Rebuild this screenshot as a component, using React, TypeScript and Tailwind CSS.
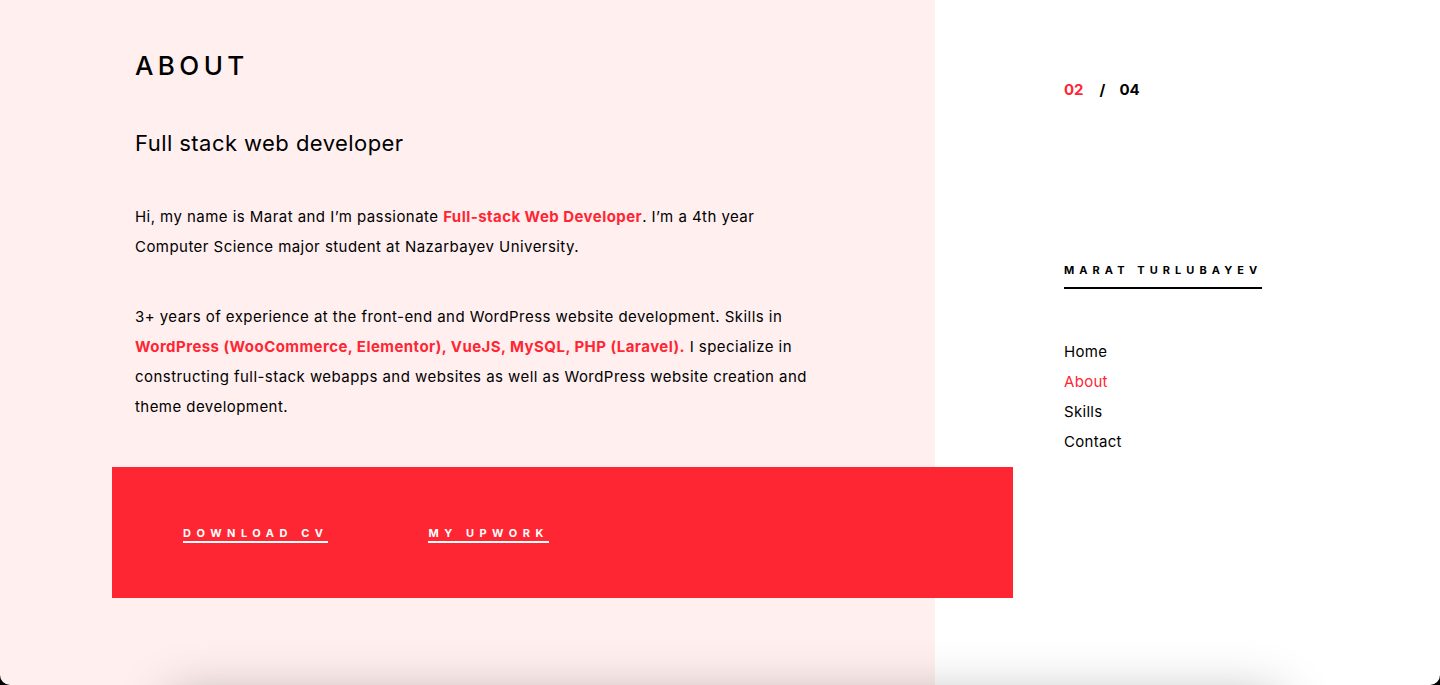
import React from 'react';

const RED = 'text-[#ff2633]';

const App = () => {
  return (
    <div className="bg-black min-h-[685px] font-['Inter',sans-serif] text-black">
      <div className="relative flex h-[685px] overflow-hidden rounded-b-[10px]">
        {/* left: about content */}
        <section className="w-[935px] shrink-0 bg-[#ffefef] pl-[135px] pt-[48px]">
          <h1 className="text-[26px] leading-[36px] font-medium tracking-[0.17em]">ABOUT</h1>
          <h2 className="mt-[43px] text-[22px] leading-[32px] tracking-[0.02em]">Full stack web developer</h2>

          <div className="max-w-[680px] text-[15px] leading-[30px] tracking-[0.03em]">
            <p className="mt-[43px]">
              Hi, my name is Marat and I’m passionate{' '}
              <span className={`${RED} font-bold`}>Full-stack Web Developer</span>. I’m a 4th year Computer Science
              major student at Nazarbayev University.
            </p>
            <p className="mt-[40px]">
              3+ years of experience at the front-end and WordPress website development. Skills in{' '}
              <span className={`${RED} font-bold`}>WordPress (WooCommerce, Elementor), VueJS, MySQL, PHP (Laravel).</span>{' '}
              I specialize in constructing full-stack webapps and websites as well as WordPress website creation and
              theme development.
            </p>
          </div>

          {/* red button band */}
          <div className="relative z-10 -ml-[23px] mt-[45px] flex h-[131px] w-[901px] items-center gap-[100px] bg-[#ff2633] pl-[71px]">
            <a href="#" className="mt-[2px] border-b-2 border-white text-[11px] font-bold leading-[16px] tracking-[0.5em] text-white">
              DOWNLOAD CV
            </a>
            <a href="#" className="mt-[2px] border-b-2 border-white text-[11px] font-bold leading-[16px] tracking-[0.5em] text-white">
              MY UPWORK
            </a>
          </div>
        </section>

        {/* right: counter + nav */}
        <aside className="flex-1 bg-white pl-[129px] pt-[79px]">
          <div className="flex items-center text-[15px] font-bold leading-[22px]">
            <span className={RED}>02</span>
            <span className="ml-[16px]">/</span>
            <span className="ml-[14px]">04</span>
          </div>

          <div className="mt-[155px]">
            <span className="inline-block border-b-2 border-black pb-[9px] text-[11px] font-bold leading-[16px] tracking-[0.46em]">
              MARAT TURLUBAYEV
            </span>
          </div>

          <nav className="mt-[48px] flex flex-col text-[15px] leading-[30px] tracking-[0.02em]">
            <a href="#">Home</a>
            <a href="#" className={RED}>About</a>
            <a href="#">Skills</a>
            <a href="#">Contact</a>
          </nav>
        </aside>

        {/* next section card peeking at the bottom */}
        <div className="absolute left-[170px] right-[160px] top-[698px] h-[200px] bg-white shadow-[0_0_50px_rgba(0,0,0,0.3)]" />
      </div>
    </div>
  );
};

export default App;
